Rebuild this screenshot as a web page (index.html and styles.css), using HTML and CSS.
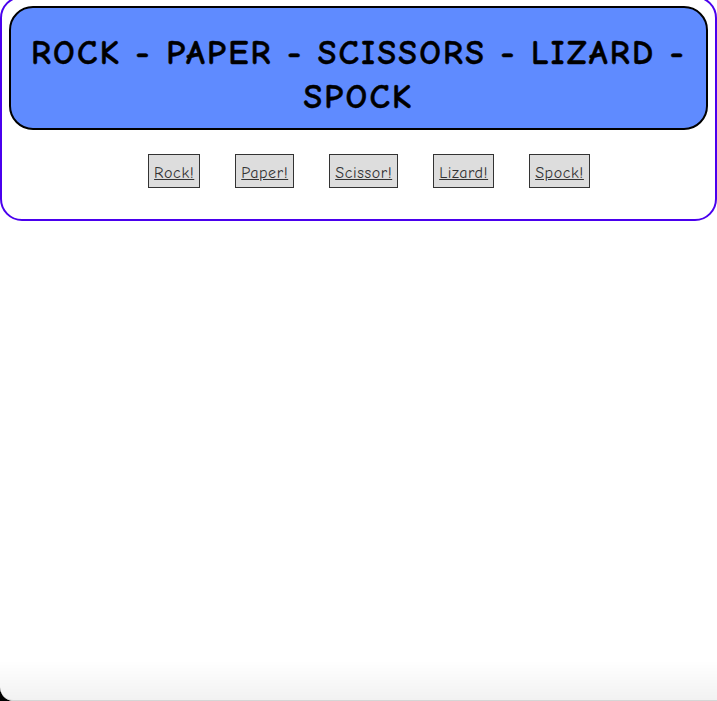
FILE: index.html
```html
<!DOCTYPE html>
<html lang="en">
<head>
<meta charset="utf-8">
<title>Rock Paper Scissors Lizard Spock</title>
<link rel="stylesheet" href="styles.css">
</head>
<body>
<div class="game">
  <header class="banner">
    <h1 class="title">ROCK - PAPER - SCISSORS - LIZARD - SPOCK</h1>
  </header>
  <div class="choices">
    <button class="choice">Rock!</button>
    <button class="choice">Paper!</button>
    <button class="choice">Scissor!</button>
    <button class="choice">Lizard!</button>
    <button class="choice">Spock!</button>
  </div>
</div>
<div class="shade"></div>
</body>
</html>
```

FILE: styles.css
```css
html, body {
  margin: 0;
  padding: 0;
  background: #ffffff;
}
body {
  font-family: "Comic Sans MS", "Comic Neue", "DejaVu Sans", sans-serif;
  height: 701px;
  overflow: hidden;
}
.game {
  margin-top: -4px;
  border: 2px solid #4a00ee;
  border-radius: 22px;
  padding: 8px 7px 0 7px;
  box-sizing: border-box;
  height: 225px;
}
.banner {
  background: #5f8bff;
  border: 2px solid #000;
  border-radius: 24px;
  height: 124px;
  box-sizing: border-box;
  display: flex;
  align-items: center;
  justify-content: center;
  padding: 13px 14px 0 14px;
}
.title {
  margin: 0;
  font-size: 34px;
  letter-spacing: 2.3px;
  font-weight: bold;
  line-height: 44px;
  text-align: center;
  color: #000;
  -webkit-text-stroke: 0.4px #000;
}
.choices {
  display: flex;
  justify-content: center;
  gap: 35px;
  padding-left: 21px;
  margin-top: 24px;
}
.choice {
  font-family: inherit;
  font-size: 16px;
  letter-spacing: 0.6px;
  color: #333;
  text-decoration: underline;
  background: #dddddd;
  border: 1px solid #333;
  border-radius: 0;
  padding: 3px 5px 0 5px;
  height: 34px;
}
.shade {
  position: fixed;
  left: 0;
  right: 0;
  bottom: 0;
  height: 40px;
  background: linear-gradient(to bottom, rgba(0,0,0,0), rgba(0,0,0,0.05));
  border-bottom: 1px solid #d6d6d6;
  border-bottom-left-radius: 14px;
  box-shadow: -14px 10px 0 0 #000;
  pointer-events: none;
}
```
